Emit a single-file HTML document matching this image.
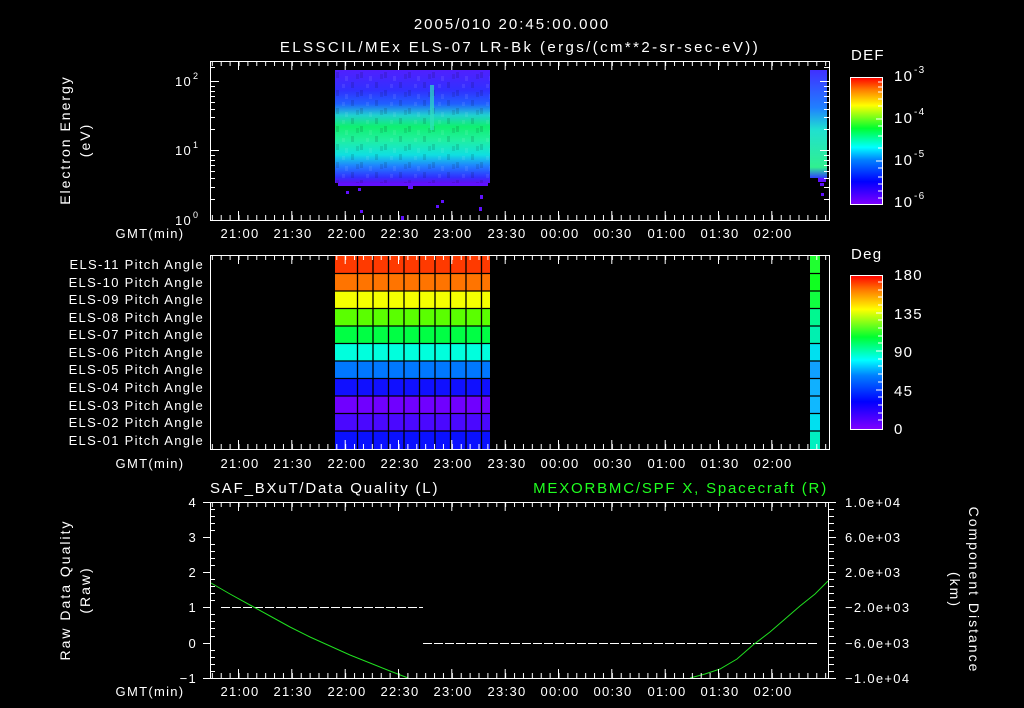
<!DOCTYPE html>
<html><head><meta charset="utf-8"><style>
html,body{margin:0;padding:0;background:#000;width:1024px;height:708px;overflow:hidden}
svg text{font-family:"Liberation Sans",sans-serif;fill:#fff;font-size:13px;letter-spacing:1.3px}
</style></head><body>
<svg width="1024" height="708" viewBox="0 0 1024 708" xmlns="http://www.w3.org/2000/svg">
<defs>
<pattern id="tkTop" patternUnits="userSpaceOnUse" x="238.5" y="0" width="8.889" height="708"><line x1="0.5" y1="0" x2="0.5" y2="708" stroke="#fff"/></pattern>
<linearGradient id="spec" x1="0" y1="70" x2="0" y2="183" gradientUnits="userSpaceOnUse">
<stop offset="0" stop-color="#5020ff"/><stop offset="0.18" stop-color="#3030ff"/><stop offset="0.3" stop-color="#2060ff"/>
<stop offset="0.4" stop-color="#20d0d0"/><stop offset="0.5" stop-color="#10f070"/><stop offset="0.62" stop-color="#20f0a0"/>
<stop offset="0.75" stop-color="#10e0e0"/><stop offset="0.85" stop-color="#2080ff"/><stop offset="0.95" stop-color="#3030ff"/><stop offset="1" stop-color="#6010f0"/>
</linearGradient>
<linearGradient id="specR" x1="0" y1="70" x2="0" y2="178" gradientUnits="userSpaceOnUse">
<stop offset="0" stop-color="#4030ff"/><stop offset="0.35" stop-color="#2080ff"/><stop offset="0.55" stop-color="#20e0d0"/><stop offset="0.9" stop-color="#30f090"/><stop offset="1" stop-color="#3040ff"/>
</linearGradient>
<linearGradient id="cbar" x1="0" y1="1" x2="0" y2="0">
<stop offset="0" stop-color="#8000ff"/><stop offset="0.18" stop-color="#0000ff"/><stop offset="0.35" stop-color="#0080ff"/><stop offset="0.45" stop-color="#00ffff"/><stop offset="0.6" stop-color="#00ff30"/><stop offset="0.78" stop-color="#ffff00"/><stop offset="0.9" stop-color="#ff8000"/><stop offset="1" stop-color="#ff0000"/>
</linearGradient>
<pattern id="noise" patternUnits="userSpaceOnUse" width="24" height="18">
<rect x="0" y="0" width="3" height="6" fill="#000" opacity="0.12"/><rect x="9" y="4" width="3" height="5" fill="#fff" opacity="0.08"/><rect x="15" y="10" width="3" height="6" fill="#000" opacity="0.12"/><rect x="6" y="12" width="3" height="4" fill="#fff" opacity="0.08"/><rect x="20" y="2" width="3" height="5" fill="#000" opacity="0.1"/>
</pattern>
<clipPath id="cT"><rect x="210" y="61" width="619" height="159"/></clipPath>
</defs>

<text x="512" y="29" text-anchor="middle" style="font-size:15px;letter-spacing:2px">2005/010 20:45:00.000</text>
<text x="520" y="52" text-anchor="middle" style="font-size:15px;letter-spacing:2.4px">ELSSCIL/MEx ELS-07 LR-Bk  (ergs/(cm**2-sr-sec-eV))</text>

<!-- TOP PANEL -->
<rect x="335" y="70" width="155" height="113" fill="url(#spec)"/>
<rect x="335" y="70" width="155" height="113" fill="url(#noise)"/>
<rect x="430" y="85" width="4" height="45" fill="#30e0c0" opacity="0.7"/>
<g fill="#6010ff"><rect x="338" y="183" width="150" height="3"/><rect x="346" y="191" width="3" height="3"/><rect x="358" y="188" width="3" height="3"/><rect x="408" y="185" width="5" height="4"/><rect x="436" y="205" width="3" height="3"/><rect x="441" y="200" width="3" height="3"/><rect x="480" y="195" width="3" height="4"/><rect x="479" y="207" width="3" height="4"/><rect x="360" y="210" width="3" height="3"/><rect x="401" y="216" width="3" height="4"/></g>
<rect x="810" y="70" width="17" height="108" fill="url(#specR)"/>
<g fill="#6010ff"><rect x="818" y="178" width="8" height="4"/><rect x="820" y="183" width="4" height="3"/><rect x="821" y="193" width="3" height="3"/></g>
<rect x="210.5" y="61.5" width="619" height="159" fill="none" stroke="#fff"/>
<g clip-path="url(#cT)">
<rect x="210" y="61" width="619" height="5" fill="url(#tkTop)"/>
<rect x="210" y="215" width="619" height="5" fill="url(#tkTop)"/>
</g>
<g stroke="#fff">
<path d="M238.5 61v9M291.8 61v9M345.2 61v9M398.5 61v9M451.8 61v9M505.2 61v9M558.5 61v9M611.8 61v9M665.2 61v9M718.5 61v9M771.8 61v9M238.5 220v-9M291.8 220v-9M345.2 220v-9M398.5 220v-9M451.8 220v-9M505.2 220v-9M558.5 220v-9M611.8 220v-9M665.2 220v-9M718.5 220v-9M771.8 220v-9"/>
<path d="M210 81.5h9M210 150.5h9M210 199.5h5M210 187.5h5M210 178.5h5M210 171.5h5M210 165.5h5M210 160.5h5M210 155.5h5M210 129.5h5M210 117.5h5M210 109.5h5M210 102.5h5M210 96.5h5M210 91.5h5M210 86.5h5M210 67.5h5M829 81.5h-9M829 150.5h-9M829 199.5h-5M829 187.5h-5M829 178.5h-5M829 171.5h-5M829 165.5h-5M829 160.5h-5M829 155.5h-5M829 129.5h-5M829 117.5h-5M829 109.5h-5M829 102.5h-5M829 96.5h-5M829 91.5h-5M829 86.5h-5M829 67.5h-5"/>
</g>
<text x="175" y="86">10</text><text x="193" y="79" style="font-size:9px">2</text>
<text x="175" y="155">10</text><text x="193" y="148" style="font-size:9px">1</text>
<text x="175" y="225">10</text><text x="193" y="218" style="font-size:9px">0</text>
<text transform="translate(70,140) rotate(-90)" text-anchor="middle" style="font-size:14px;letter-spacing:2px">Electron Energy</text>
<text transform="translate(90,140) rotate(-90)" text-anchor="middle" style="font-size:14px;letter-spacing:2px">(eV)</text>

<g text-anchor="middle">
<text x="150" y="238">GMT(min)</text>
<text x="240" y="238">21:00</text><text x="293" y="238">21:30</text><text x="347" y="238">22:00</text><text x="400" y="238">22:30</text><text x="453" y="238">23:00</text><text x="507" y="238">23:30</text><text x="560" y="238">00:00</text><text x="613" y="238">00:30</text><text x="667" y="238">01:00</text><text x="720" y="238">01:30</text><text x="773" y="238">02:00</text>
</g>

<text x="851" y="60" style="font-size:15px">DEF</text>
<rect x="850.5" y="77.5" width="32" height="127" fill="url(#cbar)" stroke="#fff"/>
<g stroke="#fff"><path d="M882 82h-4M882 87h-4M882 92h-4M882 99h-4M882 106h-4M882 119h-6M882 126h-4M882 136h-4M882 148h-4M882 161h-6M882 168h-4M882 177h-4M882 184h-4M882 191h-4M882 198h-4"/></g>
<text x="894" y="81" style="font-size:15px">10</text><text x="914" y="73" style="font-size:10px">-3</text>
<text x="894" y="123" style="font-size:15px">10</text><text x="914" y="115" style="font-size:10px">-4</text>
<text x="894" y="165" style="font-size:15px">10</text><text x="914" y="157" style="font-size:10px">-5</text>
<text x="894" y="207" style="font-size:15px">10</text><text x="914" y="199" style="font-size:10px">-6</text>

<!-- MIDDLE PANEL -->
<g>
<rect x="335" y="256" width="155" height="17.5" fill="#ff3a00"/>
<rect x="335" y="273.5" width="155" height="17.5" fill="#ff7400"/>
<rect x="335" y="291" width="155" height="17.5" fill="#f5ff00"/>
<rect x="335" y="308.5" width="155" height="17.5" fill="#5aff00"/>
<rect x="335" y="326" width="155" height="17.5" fill="#00ff44"/>
<rect x="335" y="343.5" width="155" height="17.5" fill="#00ffdd"/>
<rect x="335" y="361" width="155" height="17.5" fill="#0078ff"/>
<rect x="335" y="378.5" width="155" height="17.5" fill="#1010ff"/>
<rect x="335" y="396" width="155" height="17.5" fill="#7000ff"/>
<rect x="335" y="413.5" width="155" height="17.5" fill="#4a08ff"/>
<rect x="335" y="431" width="155" height="18" fill="#0a10ff"/>
</g>
<g>
<rect x="810" y="256" width="10" height="17.5" fill="#20ff30"/>
<rect x="810" y="273.5" width="10" height="17.5" fill="#10ff20"/>
<rect x="810" y="291" width="10" height="17.5" fill="#10ff40"/>
<rect x="810" y="308.5" width="10" height="17.5" fill="#00f890"/>
<rect x="810" y="326" width="10" height="17.5" fill="#00f0b0"/>
<rect x="810" y="343.5" width="10" height="17.5" fill="#00e0f0"/>
<rect x="810" y="361" width="10" height="17.5" fill="#10a0ff"/>
<rect x="810" y="378.5" width="10" height="17.5" fill="#10b0ff"/>
<rect x="810" y="396" width="10" height="17.5" fill="#10b8ff"/>
<rect x="810" y="413.5" width="10" height="17.5" fill="#00e0f0"/>
<rect x="810" y="431" width="10" height="18" fill="#00f0c0"/>
</g>
<g stroke="#000" stroke-width="1.3">
<path d="M335 273.5h155M335 291h155M335 308.5h155M335 326h155M335 343.5h155M335 361h155M335 378.5h155M335 396h155M335 413.5h155M335 431h155M810 273.5h10M810 291h10M810 308.5h10M810 326h10M810 343.5h10M810 361h10M810 378.5h10M810 396h10M810 413.5h10M810 431h10"/>
<path d="M357.5 256v193M373 256v193M388.5 256v193M404 256v193M419.5 256v193M435 256v193M450.5 256v193M466 256v193M481.5 256v193"/>
</g>
<rect x="210.5" y="255.5" width="619" height="194" fill="none" stroke="#fff"/>
<g clip-path="url(#cT)" transform="translate(0,194)">
<rect x="210" y="61" width="619" height="5" fill="url(#tkTop)"/>
</g>
<g clip-path="url(#cT)" transform="translate(0,229)">
<rect x="210" y="215" width="619" height="5" fill="url(#tkTop)"/>
</g>
<g stroke="#fff">
<path d="M238.5 255v9M291.8 255v9M345.2 255v9M398.5 255v9M451.8 255v9M505.2 255v9M558.5 255v9M611.8 255v9M665.2 255v9M718.5 255v9M771.8 255v9M238.5 449v-9M291.8 449v-9M345.2 449v-9M398.5 449v-9M451.8 449v-9M505.2 449v-9M558.5 449v-9M611.8 449v-9M665.2 449v-9M718.5 449v-9M771.8 449v-9"/>
</g>
<g text-anchor="end" style="letter-spacing:1.2px">
<text x="204" y="269">ELS-11 Pitch Angle</text>
<text x="204" y="287">ELS-10 Pitch Angle</text>
<text x="204" y="304">ELS-09 Pitch Angle</text>
<text x="204" y="322">ELS-08 Pitch Angle</text>
<text x="204" y="339">ELS-07 Pitch Angle</text>
<text x="204" y="357">ELS-06 Pitch Angle</text>
<text x="204" y="374">ELS-05 Pitch Angle</text>
<text x="204" y="392">ELS-04 Pitch Angle</text>
<text x="204" y="410">ELS-03 Pitch Angle</text>
<text x="204" y="427">ELS-02 Pitch Angle</text>
<text x="204" y="445">ELS-01 Pitch Angle</text>
</g>
<g text-anchor="middle">
<text x="150" y="468">GMT(min)</text>
<text x="240" y="468">21:00</text><text x="293" y="468">21:30</text><text x="347" y="468">22:00</text><text x="400" y="468">22:30</text><text x="453" y="468">23:00</text><text x="507" y="468">23:30</text><text x="560" y="468">00:00</text><text x="613" y="468">00:30</text><text x="667" y="468">01:00</text><text x="720" y="468">01:30</text><text x="773" y="468">02:00</text>
</g>
<text x="851" y="259" style="font-size:15px">Deg</text>
<rect x="850.5" y="275.5" width="32" height="154" fill="url(#cbar)" stroke="#fff"/>
<g stroke="#fff"><path d="M882 282h-4M882 290h-4M882 297h-4M882 305h-4M882 313h-6M882 320h-4M882 328h-4M882 336h-4M882 343h-4M882 351h-6M882 359h-4M882 366h-4M882 374h-4M882 382h-4M882 390h-6M882 397h-4M882 405h-4M882 413h-4M882 420h-4"/></g>
<text x="894" y="280" style="font-size:15px">180</text><text x="894" y="319" style="font-size:15px">135</text><text x="894" y="357" style="font-size:15px">90</text><text x="894" y="396" style="font-size:15px">45</text><text x="894" y="434" style="font-size:15px">0</text>

<!-- BOTTOM PANEL -->
<text x="210" y="493" style="font-size:15px;letter-spacing:1.8px">SAF_BXuT/Data Quality (L)</text>
<text x="828" y="493" text-anchor="end" style="font-size:15px;letter-spacing:1.8px;fill:#20ff20">MEXORBMC/SPF X, Spacecraft (R)</text>
<line x1="221" y1="607.5" x2="423" y2="607.5" stroke="#fff" stroke-dasharray="9 2"/>
<line x1="423" y1="643.5" x2="818" y2="643.5" stroke="#fff" stroke-dasharray="9 2"/>
<polyline points="211,583 230,594 250,605 270,616 290,627 310,637 330,646 350,655 370,663 390,671 408,678" fill="none" stroke="#20e020"/>
<polyline points="690,678 705,674 720,669 737,659 753,645 770,632 785,619 800,606 815,594 828,581" fill="none" stroke="#20e020"/>
<rect x="210.5" y="502.5" width="618" height="176" fill="none" stroke="#fff"/>
<g clip-path="url(#cT)" transform="translate(0,441)">
<rect x="210" y="61" width="619" height="5" fill="url(#tkTop)"/>
</g>
<g clip-path="url(#cT)" transform="translate(0,458)">
<rect x="210" y="215" width="619" height="5" fill="url(#tkTop)"/>
</g>
<g stroke="#fff">
<path d="M238.5 502v9M291.8 502v9M345.2 502v9M398.5 502v9M451.8 502v9M505.2 502v9M558.5 502v9M611.8 502v9M665.2 502v9M718.5 502v9M771.8 502v9M238.5 678v-9M291.8 678v-9M345.2 678v-9M398.5 678v-9M451.8 678v-9M505.2 678v-9M558.5 678v-9M611.8 678v-9M665.2 678v-9M718.5 678v-9M771.8 678v-9"/>
<path d="M203 502.5h7M203 537.5h7M203 572.5h7M203 607.5h7M203 643.5h7M203 678.5h7M210 509.5h5M210 516.5h5M210 523.5h5M210 530.5h5M210 544.5h5M210 551.5h5M210 558.5h5M210 565.5h5M210 579.5h5M210 586.5h5M210 593.5h5M210 600.5h5M210 614.5h5M210 621.5h5M210 628.5h5M210 636.5h5M210 650.5h5M210 657.5h5M210 664.5h5M210 671.5h5"/>
<path d="M829 502.5h7M829 537.5h7M829 572.5h7M829 607.5h7M829 643.5h7M829 678.5h7M829 509.5h5M829 516.5h5M829 523.5h5M829 530.5h5M829 544.5h5M829 551.5h5M829 558.5h5M829 565.5h5M829 579.5h5M829 586.5h5M829 593.5h5M829 600.5h5M829 614.5h5M829 621.5h5M829 628.5h5M829 636.5h5M829 650.5h5M829 657.5h5M829 664.5h5M829 671.5h5"/>
</g>
<g text-anchor="end">
<text x="197" y="507">4</text><text x="197" y="542">3</text><text x="197" y="577">2</text><text x="197" y="612">1</text><text x="197" y="648">0</text><text x="197" y="683">−1</text>
</g>
<g>
<text x="845" y="507">1.0e+04</text><text x="845" y="542">6.0e+03</text><text x="845" y="577">2.0e+03</text><text x="845" y="612">−2.0e+03</text><text x="845" y="648">−6.0e+03</text><text x="845" y="683">−1.0e+04</text>
</g>
<text transform="translate(70,590) rotate(-90)" text-anchor="middle" style="font-size:14px;letter-spacing:2px">Raw Data Quality</text>
<text transform="translate(90,590) rotate(-90)" text-anchor="middle" style="font-size:14px;letter-spacing:2px">(Raw)</text>
<text transform="translate(969,590) rotate(90)" text-anchor="middle" style="font-size:14px;letter-spacing:2px">Component Distance</text>
<text transform="translate(950,590) rotate(90)" text-anchor="middle" style="font-size:14px;letter-spacing:2px">(km)</text>
<g text-anchor="middle">
<text x="150" y="696">GMT(min)</text>
<text x="240" y="696">21:00</text><text x="293" y="696">21:30</text><text x="347" y="696">22:00</text><text x="400" y="696">22:30</text><text x="453" y="696">23:00</text><text x="507" y="696">23:30</text><text x="560" y="696">00:00</text><text x="613" y="696">00:30</text><text x="667" y="696">01:00</text><text x="720" y="696">01:30</text><text x="773" y="696">02:00</text>
</g>
</svg>
</body></html>
